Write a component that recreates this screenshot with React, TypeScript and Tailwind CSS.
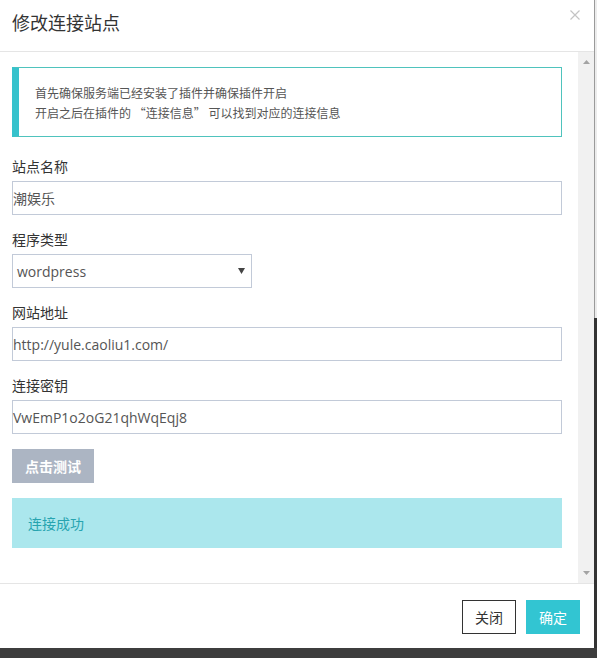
const font = "font-['Open_Sans','Noto_Sans_CJK_SC',sans-serif]"

interface FieldProps {
  label: string
  value: string
}

function Field({ label, value }: FieldProps) {
  return (
    <div className="mt-[15px] first:mt-0">
      <div className="text-[14px] leading-[20px] text-[#333] mb-[4px]">{label}</div>
      <div className="h-[34px] border border-[#c2cad8] bg-white flex items-center text-[14px] text-[#555]">
        {value}
      </div>
    </div>
  )
}

function Triangle({ up }: { up?: boolean }) {
  return (
    <svg width="7" height="4" viewBox="0 0 7 4" className="block">
      {up ? (
        <path d="M0 4 L3.5 0 L7 4 Z" fill="#a3a3a3" />
      ) : (
        <path d="M0 0 L3.5 4 L7 0 Z" fill="#a3a3a3" />
      )}
    </svg>
  )
}

export default function App() {
  return (
    <div className={`${font} w-[597px] h-[658px] flex flex-col bg-[#3d3d3d] overflow-hidden`}>
      <div className="flex h-[648px]">
        <div className="w-[594px] h-full bg-white flex flex-col">
          {/* header */}
          <div className="h-[52px] border-b border-[#e5e5e5] flex justify-between items-start pl-[12px] pr-[14px] shrink-0">
            <h4 className="pt-[9px] text-[18px] leading-[28px] text-[#333]">修改连接站点</h4>
            <button className="mt-[10px] w-[10px] h-[10px]">
              <svg width="10" height="10" viewBox="0 0 10 10" className="block">
                <path d="M0.5 0.5 L9.5 9.5 M9.5 0.5 L0.5 9.5" stroke="#c4c4c4" strokeWidth="1.2" />
              </svg>
            </button>
          </div>

          {/* body */}
          <div className="flex h-[531px] shrink-0">
            <div className="w-[578px] pl-[12px] pr-[16px] pt-[15px]">
              <div className="border border-[#4fc3bd] border-l-[7px] border-l-[#36c2cc] pl-[16px] pt-[15px] pb-[13px] text-[12px] leading-[20px] text-[#555] font-['Noto_Sans_CJK_SC',sans-serif]">
                <p>首先确保服务端已经安装了插件并确保插件开启</p>
                <p>开启之后在插件的 “连接信息” 可以找到对应的连接信息</p>
              </div>

              <div className="mt-[20px]">
                <Field label="站点名称" value="潮娱乐" />
                <div className="mt-[15px]">
                  <div className="text-[14px] leading-[20px] text-[#333] mb-[4px]">程序类型</div>
                  <div className="w-[240px] h-[34px] border border-[#c2cad8] bg-white flex items-center justify-between pl-[4px] pr-[6px] text-[14px] text-[#555]">
                    <span>wordpress</span>
                    <svg width="7" height="6" viewBox="0 0 7 6" className="block">
                      <path d="M0 0 L7 0 L3.5 6 Z" fill="#444" />
                    </svg>
                  </div>
                </div>
                <Field label="网站地址" value="http://yule.caoliu1.com/" />
                <Field label="连接密钥" value="VwEmP1o2oG21qhWqEqj8" />
              </div>

              <button className="mt-[15px] w-[82px] h-[34px] bg-[#acb5c3] text-white text-[14px] font-semibold">
                点击测试
              </button>

              <div className="mt-[15px] h-[50px] bg-[#abe7ed] flex items-center pl-[16px] text-[14px] text-[#27a4b0]">
                连接成功
              </div>
            </div>
            <div className="w-[16px] bg-[#f1f1f1] flex flex-col items-center justify-between py-[8px]">
              <Triangle up />
              <Triangle />
            </div>
          </div>

          {/* footer */}
          <div className="flex-1 border-t border-[#e5e5e5] flex justify-end items-start gap-[10px] pt-[16px] pr-[14px]">
            <button className="w-[54px] h-[34px] border border-[#333] bg-white text-[14px] text-[#333]">
              关闭
            </button>
            <button className="w-[54px] h-[34px] bg-[#32c5d2] text-[14px] text-white">
              确定
            </button>
          </div>
        </div>
        <div className="w-[3px] flex flex-col">
          <div className="h-[318px] bg-[#ececec] border-l border-[#9a9a9a]" />
          <div className="flex-1 bg-[#333]" />
        </div>
      </div>
    </div>
  )
}
